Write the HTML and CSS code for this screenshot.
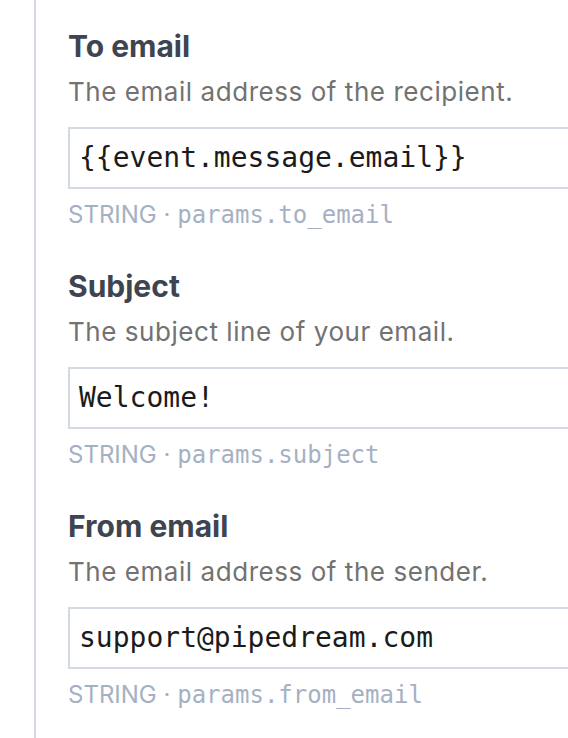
FILE: index.html
```html
<!DOCTYPE html>
<html lang="en">
<head>
<meta charset="utf-8">
<title>Params</title>
<link rel="stylesheet" href="styles.css">
</head>
<body>
<div class="panel">
  <div class="field">
    <div class="label">To email</div>
    <div class="desc">The email address of the recipient.</div>
    <div class="input">{{event.message.email}}</div>
    <div class="meta">STRING · <span class="code">params.to_email</span></div>
  </div>
  <div class="field">
    <div class="label">Subject</div>
    <div class="desc">The subject line of your email.</div>
    <div class="input">Welcome!</div>
    <div class="meta">STRING · <span class="code">params.subject</span></div>
  </div>
  <div class="field">
    <div class="label">From email</div>
    <div class="desc">The email address of the sender.</div>
    <div class="input">support@pipedream.com</div>
    <div class="meta">STRING · <span class="code">params.from_email</span></div>
  </div>
</div>
</body>
</html>
```
FILE: styles.css
```css
html, body {
  margin: 0;
  padding: 0;
  background: #ffffff;
  overflow: hidden;
  height: 100%;
}
body {
  font-family: Inter, "Liberation Sans", sans-serif;
}
.panel {
  margin-left: 34px;
  border-left: 2px solid #d4dae1;
  padding: 28px 0 0 32px;
  min-height: 100%;
  box-sizing: border-box;
}
.field {
  display: flex;
  flex-direction: column;
  margin-bottom: 37px;
}
.label {
  font-size: 30px;
  line-height: 36px;
  font-weight: 700;
  color: #3e4550;
  margin-bottom: 10px;
}
.desc {
  font-size: 26px;
  line-height: 36px;
  letter-spacing: 0.55px;
  color: #727272;
  margin-bottom: 17px;
}
.input {
  height: 58px;
  border: 2px solid #d4dae1;
  border-right: 0;
  font-family: "DejaVu Sans Mono", "Liberation Mono", monospace;
  font-size: 28px;
  line-height: 58px;
  color: #1b1b1b;
  padding-left: 9px;
  margin-bottom: 10px;
  white-space: nowrap;
  overflow: hidden;
}
.meta {
  font-size: 24px;
  line-height: 32px;
  color: #a5b1c2;
}
.code {
  font-family: "DejaVu Sans Mono", "Liberation Mono", monospace;
}
```
